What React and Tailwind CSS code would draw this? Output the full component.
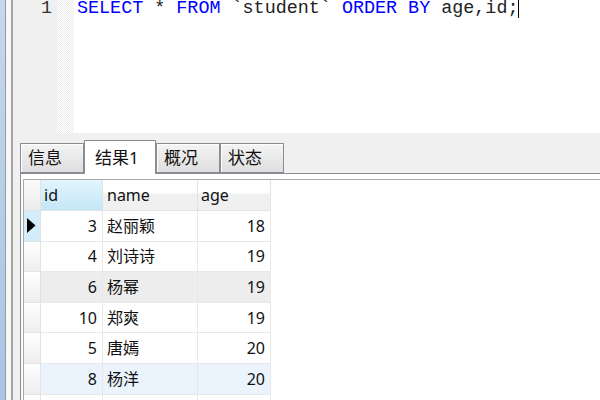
import React from 'react';

const rows = [
  { id: 3, name: '赵丽颖', age: 18, bg: 'bg-white', current: true },
  { id: 4, name: '刘诗诗', age: 19, bg: 'bg-white' },
  { id: 6, name: '杨幂', age: 19, bg: 'bg-[#ededed]' },
  { id: 10, name: '郑爽', age: 19, bg: 'bg-white' },
  { id: 5, name: '唐嫣', age: 20, bg: 'bg-white' },
  { id: 8, name: '杨洋', age: 20, bg: 'bg-[#ebf4fd]' },
  { id: '', name: '', age: '', bg: 'bg-white' },
];

function Tab({ label, active }) {
  if (active) {
    return (
      <div className="w-[72px] h-[34px] -mb-px bg-white border border-b-0 border-[#898c95] flex items-center pl-[10px] text-[17px] text-[#111] relative z-10">
        {label}
      </div>
    );
  }
  return (
    <div className="w-[64px] h-[30px] bg-gradient-to-b from-[#f4f4f4] to-[#dedede] border border-[#898c95] shadow-[inset_1px_1px_0_#ffffff] flex items-center pl-[7px] text-[17px] text-[#111]">
      {label}
    </div>
  );
}

export default function App() {
  return (
    <div className="w-[600px] h-[400px] overflow-hidden flex bg-[#f0f0f0] font-['Noto_Sans','Noto_Sans_CJK_SC',sans-serif]">
      {/* window frame on the left */}
      <div className="w-[5px] bg-gradient-to-b from-[#c4d8ee] to-[#a9c4e4]" />
      <div className="w-px bg-[#9a9a9a]" />
      <div className="w-[5px] bg-[#f7f7f7]" />
      <div className="w-[2px] bg-[#a5a5a5]" />

      <div className="flex-1 flex flex-col min-w-0">
        {/* SQL editor */}
        <div className="h-[133px] flex bg-white shrink-0">
          <div className="w-[44px] bg-[#f0f0f0] flex justify-end pr-[5px]">
            <span className="font-['Liberation_Mono',monospace] text-[18.4px] leading-[17px] h-[17px] text-[#333]">1</span>
          </div>
          <div className="w-[17px] bg-[repeating-conic-gradient(#ececec_0_25%,#ffffff_0_50%)] bg-[length:2px_2px]" />
          <div className="flex-1 pl-[3px]">
            <div className="font-['Liberation_Mono',monospace] text-[18.4px] leading-[17px] whitespace-pre flex items-start">
              <span className="text-[#0000ff]">SELECT</span>
              <span className="text-[#222]"> * </span>
              <span className="text-[#0000ff]">FROM</span>
              <span className="text-[#222]"> `student` </span>
              <span className="text-[#0000ff]">ORDER BY</span>
              <span className="text-[#222]"> age,id;</span>
              <span className="w-px h-[18px] bg-black" />
            </div>
          </div>
        </div>

        {/* result tabs */}
        <div className="flex items-end pl-[7px] pt-[7px] shrink-0">
          <Tab label="信息" />
          <Tab label="结果1" active />
          <Tab label="概况" />
          <Tab label="状态" />
        </div>

        {/* result panel */}
        <div className="flex-1 ml-[7px] border-t border-l border-[#898c95] bg-white pl-[2px] pt-[5px]">
          <div className="h-full border-t border-l border-[#a8a8a8] text-[16px] text-[#111]">
            <div className="w-fit">
              {/* header */}
              <div className="flex h-[31px]">
                <div className="w-[17px] bg-gradient-to-b from-[#fafafa] to-[#ececec] border-r border-b border-[#e3e3e3]" />
                <div className="w-[62px] bg-gradient-to-b from-[#e3f5fd] to-[#c4e7f8] border-r border-b border-[#e3e3e3] pl-[3px] flex items-center">id</div>
                <div className="w-[95px] bg-gradient-to-b from-[#ffffff] from-40% to-[#f0f0f0] to-50% border-r border-b border-[#e3e3e3] pl-[4px] flex items-center">name</div>
                <div className="w-[73px] bg-gradient-to-b from-[#ffffff] from-40% to-[#f0f0f0] to-50% border-r border-b border-[#e3e3e3] pl-[3px] flex items-center">age</div>
              </div>
              {rows.map((r, i) => (
                <div key={i} className={`flex h-[30.6px] ${r.bg}`}>
                  <div
                    className={`w-[17px] border-r border-b border-[#e3e3e3] flex items-center ${
                      r.current ? 'bg-[#d3eefa]' : 'bg-gradient-to-b from-[#ffffff] to-[#eeeeee]'
                    }`}
                  >
                    {r.current && (
                      <svg width="9" height="15" viewBox="0 0 9 15" className="ml-[3px]">
                        <path d="M0 0 L8.5 7.5 L0 15 Z" fill="#000" />
                      </svg>
                    )}
                  </div>
                  <div className="w-[62px] border-r border-b border-[#e8e8e8] flex items-center justify-end pr-[5px]">{r.id}</div>
                  <div className="w-[95px] border-r border-b border-[#e8e8e8] flex items-center pl-[4px]">{r.name}</div>
                  <div className="w-[73px] border-r border-b border-[#e8e8e8] flex items-center justify-end pr-[5px]">{r.age}</div>
                </div>
              ))}
            </div>
          </div>
        </div>
      </div>
    </div>
  );
}
